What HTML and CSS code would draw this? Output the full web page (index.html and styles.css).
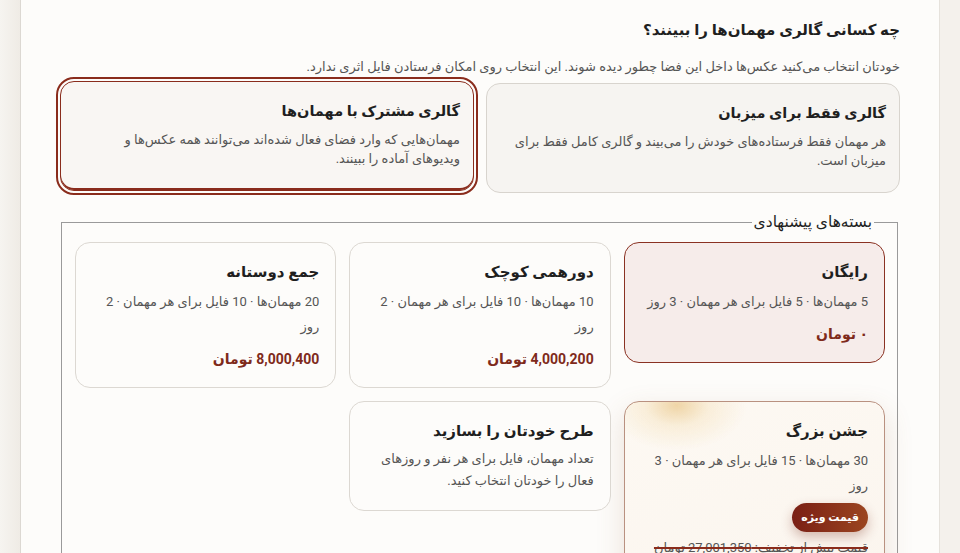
FILE: index.html
```html
<!DOCTYPE html>
<html lang="fa" dir="rtl">
<head>
<meta charset="utf-8">
<title>گالری مهمان‌ها</title>
<link rel="stylesheet" href="styles.css">
</head>
<body>
<div class="page">
  <main class="panel">
    <h2 class="section-title">چه کسانی گالری مهمان‌ها را ببینند؟</h2>
    <p class="section-desc">خودتان انتخاب می‌کنید عکس‌ها داخل این فضا چطور دیده شوند. این انتخاب روی امکان فرستادن فایل اثری ندارد.</p>

    <div class="options">
      <div class="option">
        <h3 class="option-title">گالری فقط برای میزبان</h3>
        <p class="option-desc">هر مهمان فقط فرستاده‌های خودش را می‌بیند و گالری کامل فقط برای میزبان است.</p>
      </div>
      <div class="option option-selected">
        <h3 class="option-title">گالری مشترک با مهمان‌ها</h3>
        <p class="option-desc">مهمان‌هایی که وارد فضای فعال شده‌اند می‌توانند همه عکس‌ها و ویدیوهای آماده را ببینند.</p>
      </div>
    </div>

    <fieldset class="packages">
      <legend class="packages-legend">بسته‌های پیشنهادی</legend>
      <div class="package-grid">
        <div class="package package-active">
          <h4 class="package-title">رایگان</h4>
          <p class="package-spec">5 مهمان‌ها · 5 فایل برای هر مهمان · 3 روز</p>
          <p class="package-price">۰ تومان</p>
        </div>
        <div class="package">
          <h4 class="package-title">دورهمی کوچک</h4>
          <p class="package-spec">10 مهمان‌ها · 10 فایل برای هر مهمان · 2 روز</p>
          <p class="package-price">4,000,200 تومان</p>
        </div>
        <div class="package">
          <h4 class="package-title">جمع دوستانه</h4>
          <p class="package-spec">20 مهمان‌ها · 10 فایل برای هر مهمان · 2 روز</p>
          <p class="package-price">8,000,400 تومان</p>
        </div>
        <div class="package package-featured">
          <h4 class="package-title">جشن بزرگ</h4>
          <p class="package-spec">30 مهمان‌ها · 15 فایل برای هر مهمان · 3 روز</p>
          <div class="package-badge-row"><span class="badge">قیمت ویژه</span></div>
          <p class="package-old">قیمت پیش از تخفیف: 27,001,350 تومان</p>
        </div>
        <div class="package">
          <h4 class="package-title">طرح خودتان را بسازید</h4>
          <p class="package-desc">تعداد مهمان، فایل برای هر نفر و روزهای فعال را خودتان انتخاب کنید.</p>
        </div>
      </div>
    </fieldset>
  </main>
</div>
</body>
</html>
```
FILE: styles.css
```css
html, body {
  margin: 0;
  padding: 0;
  overflow: hidden;
}
body {
  background: #f4f1ec;
  font-family: Roboto, "DejaVu Sans", sans-serif;
  color: #222;
}
.page {
  padding: 0 20px;
  background: linear-gradient(to right, #f6f4f0 0, #efebe5 20px, #f4f1ec 20px);
}
.panel {
  background: #fdfcfa;
  border-left: 1px solid #dcd8d2;
  border-right: 1px solid #e6e2dc;
  padding: 20px 39px 40px;
  min-height: 700px;
}
.section-title {
  margin: 0 0 16px;
  font-size: 15px;
  line-height: 21px;
  font-weight: 700;
  color: #1f1f1f;
}
.section-desc {
  margin: 0 0 6px;
  font-size: 13px;
  line-height: 20px;
  color: #555;
}
.options {
  display: grid;
  grid-template-columns: 1fr 1fr;
  gap: 12px;
}
.option {
  background: #f6f4f1;
  border: 1px solid #d8d4ce;
  border-radius: 14px;
  padding: 20px 13px 20px;
  height: 110px;
  box-sizing: border-box;
}
.option-selected {
  background: #f9f6f3;
  border-color: #8a2c1c;
  outline: 2px solid #8a2c1c;
  outline-offset: 2px;
  box-shadow: inset 0 -2px 0 #8a2c1c;
  transform: translateY(-2px);
}
.option-title {
  margin: 0 0 9px;
  font-size: 14.5px;
  line-height: 20px;
  font-weight: 700;
  color: #1f1f1f;
}
.option-desc {
  margin: 0;
  font-size: 13px;
  line-height: 18.5px;
  color: #555;
}
.packages {
  margin: 19px 2px 0 1px;
  border: 1px solid #9a9a9a;
  padding: 10px 12px 14px 13px;
}
.packages-legend {
  margin-right: 11px;
  padding: 0 2px;
  font-size: 15.5px;
  line-height: 20px;
  color: #1f1f1f;
}
.package-grid {
  display: grid;
  grid-template-columns: repeat(3, 1fr);
  gap: 13px;
  align-items: start;
}
.package {
  background: #fdfcfa;
  border: 1px solid #dcd8d2;
  border-radius: 15px;
  padding: 18px 16px 18px;
}
.package-active {
  background: #f6ecea;
  border-color: #8a3223;
}
.package-featured {
  border-color: #b99180;
  background:
    radial-gradient(ellipse 70px 45px at 20% 2%, rgba(236, 204, 148, 0.8) 0, rgba(243, 222, 180, 0.4) 45%, rgba(253, 250, 245, 0) 100%),
    linear-gradient(160deg, #fdf9f3 0%, #fbf5ee 100%);
  box-shadow: 0 10px 28px rgba(150, 100, 60, 0.18);
}
.package-title {
  margin: 0;
  font-size: 15px;
  line-height: 22px;
  font-weight: 700;
  color: #1f1f1f;
}
.package-spec {
  margin: 6px 0 0;
  font-size: 13px;
  line-height: 25px;
  color: #555;
}
.package-desc {
  margin: 6px 0 0;
  font-size: 13px;
  line-height: 22px;
  color: #555;
}
.package-price {
  margin: 10px 0 0;
  font-size: 14px;
  line-height: 20px;
  font-weight: 700;
  color: #7f2a1b;
}
.package-badge-row {
  margin-top: 5px;
}
.badge {
  display: inline-block;
  padding: 0 9px;
  height: 29px;
  line-height: 29px;
  border-radius: 15px;
  font-size: 11px;
  font-weight: 700;
  color: #fff;
  background: linear-gradient(to left, #9b4520 0%, #7a1f15 100%);
  box-shadow: 0 5px 12px rgba(120, 40, 20, 0.3);
}
.package-old {
  margin: 6px 0 0;
  font-size: 13px;
  line-height: 20px;
  color: #555;
  text-decoration: line-through;
  text-decoration-color: #8a2c1c;
  text-decoration-thickness: 2px;
}
```
